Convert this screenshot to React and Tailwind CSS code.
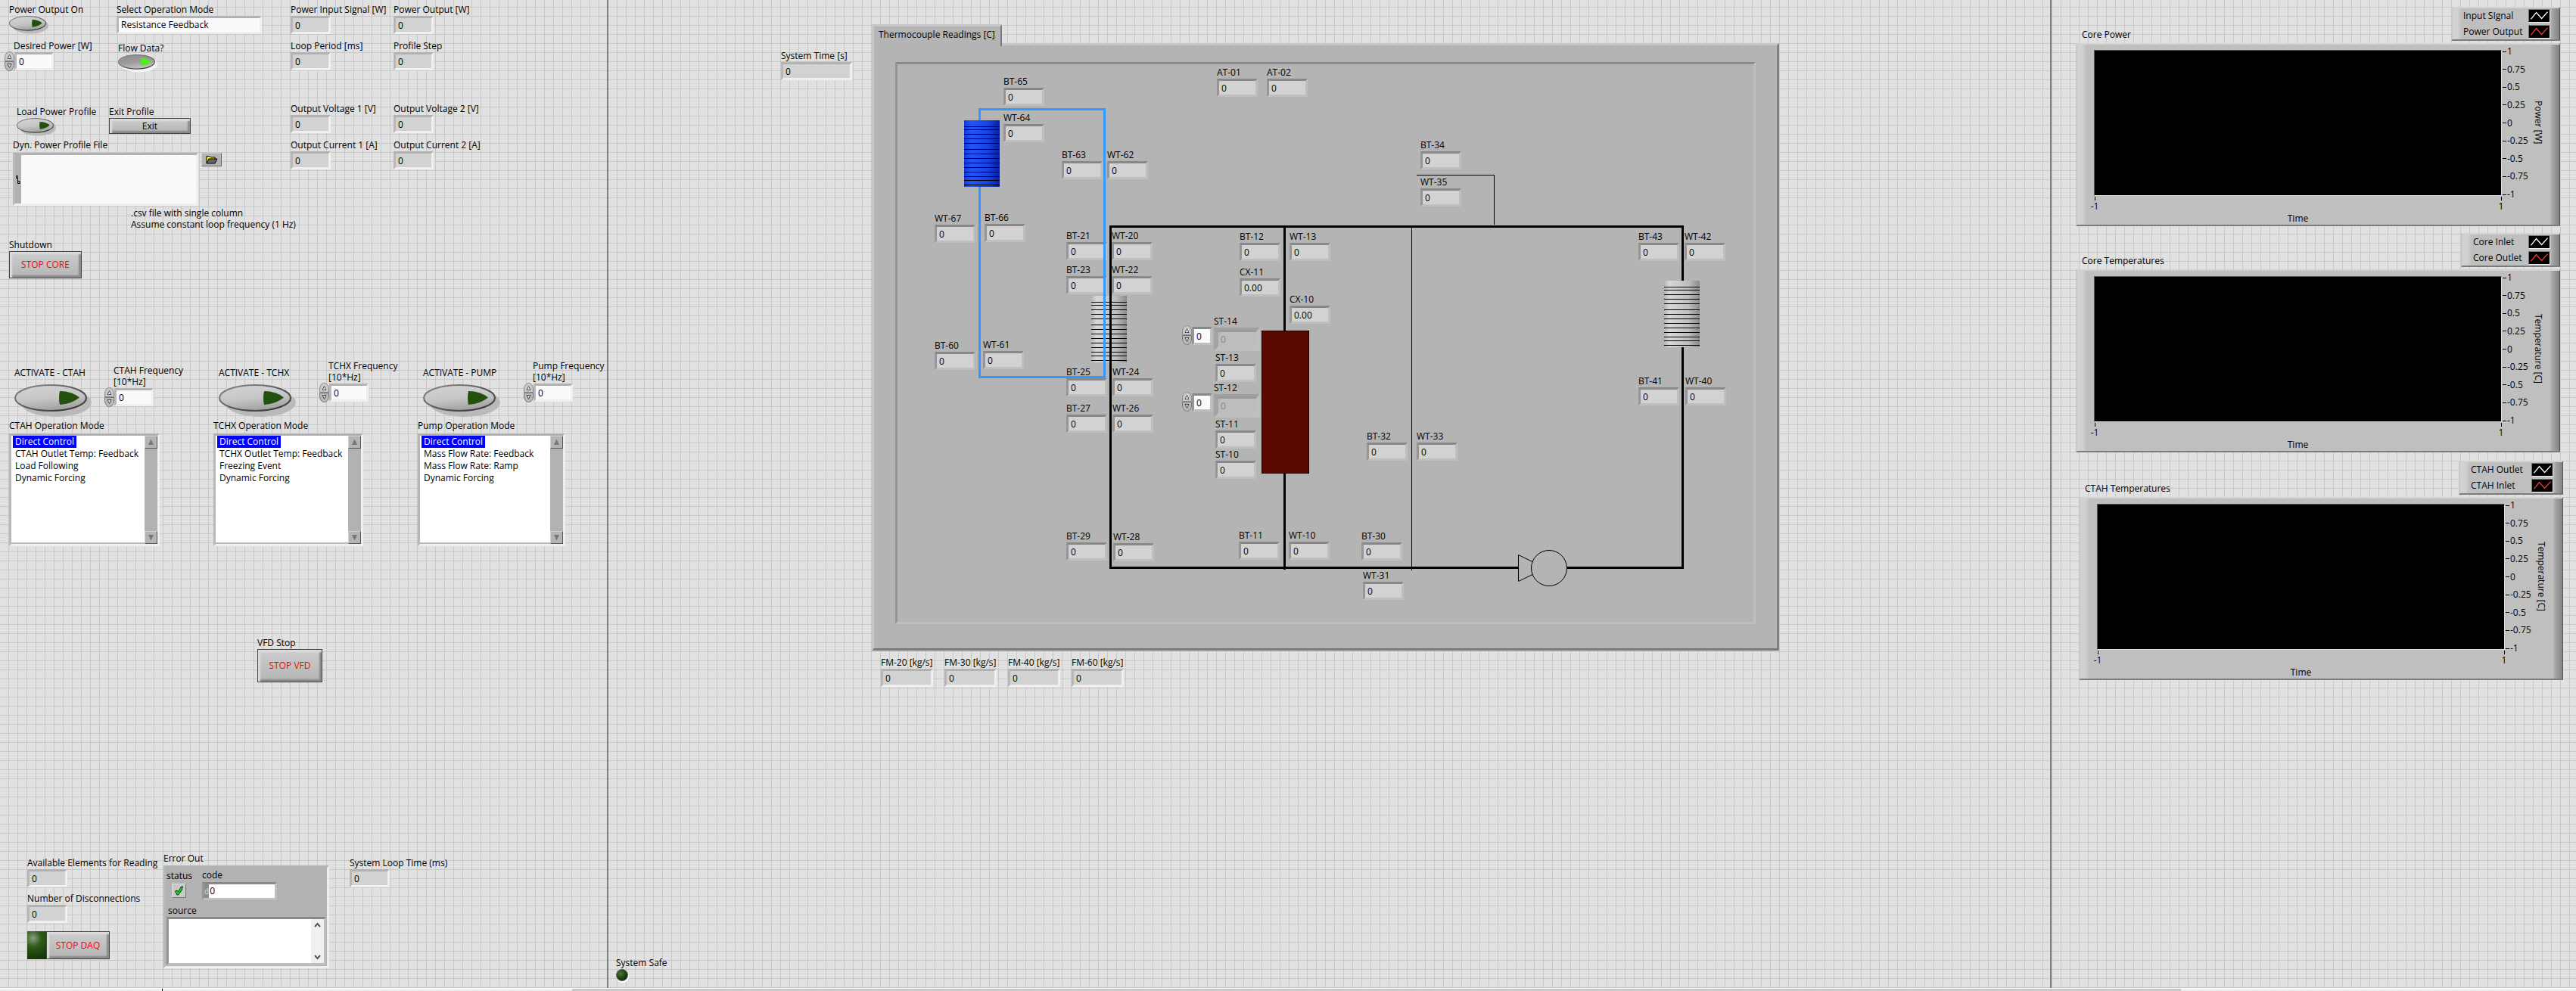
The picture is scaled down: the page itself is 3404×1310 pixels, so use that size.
import React from "react";

const FIELD = "block h-6 border-[3px] px-[3px] text-xs leading-4 text-black outline-none rounded-none appearance-none";
const ON_GRID = "border-t-[#b2b2b2] border-l-[#b8b8b8] border-r-[#efefef] border-b-[#efefef]";
const ON_PANEL = "border-t-[#888888] border-l-[#969696] border-r-[#bfbfbf] border-b-[#bfbfbf]";

function Indicator({ label, value = "0", width = "w-[53px]", gap = "" }) {
  return (
    <label className={`flex flex-col items-start whitespace-nowrap ${gap}`}>
      <span className="leading-4">{label}</span>
      <input readOnly value={value} className={`${FIELD} ${ON_GRID} ${width} bg-[#d2d2d2]`} />
    </label>
  );
}

function Spinner({ label }) {
  return (
    <span className="flex flex-col w-[13px] shrink-0">
      <button type="button" aria-label={`Increase ${label}`} className="block">
        <svg width="13" height="13" viewBox="0 0 13 13" className="block">
          <path d="M0.5 12.5V9C0.5 4 3 0.5 6.5 0.5S12.5 4 12.5 9V12.5Z" fill="#c9c9c9" stroke="#8a8a8a" />
          <path d="M4 9.5L6.5 4.5L9 9.5Z" fill="#e6e6e6" stroke="#555" />
        </svg>
      </button>
      <button type="button" aria-label={`Decrease ${label}`} className="block">
        <svg width="13" height="13" viewBox="0 0 13 13" className="block">
          <path d="M0.5 0.5V4C0.5 9 3 12.5 6.5 12.5S12.5 9 12.5 4V0.5Z" fill="#b9b9b9" stroke="#777" />
          <path d="M4 3.5L6.5 8.5L9 3.5Z" fill="#dcdcdc" stroke="#444" />
        </svg>
      </button>
    </span>
  );
}

function Control({ id, lines }) {
  return (
    <div className="flex flex-col">
      <label htmlFor={id} className="pl-3 leading-[15px] whitespace-nowrap">
        {lines.map((l) => (
          <span key={l} className="block">{l}</span>
        ))}
      </label>
      <div className="flex items-center">
        <Spinner label={lines.join(" ")} />
        <input id={id} defaultValue="0" className={`${FIELD} ${ON_GRID} w-[52px] bg-[#fafafa]`} />
      </div>
    </div>
  );
}

function Oval({ id, on = false, size = "w-[102px] h-[44px]" }) {
  return (
    <button id={id} type="button" role="switch" aria-checked={on} className={`block ${size}`}>
      <svg viewBox="0 0 102 44" preserveAspectRatio="none" className="block w-full h-full">
        <defs>
          <linearGradient id={`${id}-face`} x1="0" y1="0" x2="0.3" y2="1">
            <stop offset="0" stopColor={on ? "#8c8c8c" : "#d4d4d4"} />
            <stop offset="0.6" stopColor={on ? "#9c9c9c" : "#c6c6c6"} />
            <stop offset="1" stopColor={on ? "#c0c0c0" : "#a4a4a4"} />
          </linearGradient>
          <linearGradient id={`${id}-rim`} x1="0" y1="0" x2="1" y2="1">
            <stop offset="0" stopColor="#8c8c8c" />
            <stop offset="1" stopColor="#2c2c2c" />
          </linearGradient>
        </defs>
        <ellipse cx="55" cy="24" rx="47" ry="19" fill={on ? "#f4f4f4" : "#b9b9b9"} />
        <ellipse cx="48" cy="18" rx="47" ry="17" fill={`url(#${id}-face)`} stroke={`url(#${id}-rim)`} strokeWidth="2" />
        <path d="M60 9Q76 9 86 17.5Q76 26 60 27Q58 18 60 9Z" fill={on ? "#4cf016" : "#22500f"} />
      </svg>
    </button>
  );
}

const METAL = "border border-[#444] bg-linear-to-b from-[#cdcdcd] to-[#b4b4b4] shadow-[inset_3px_3px_2px_#dcdcdc,inset_-3px_-3px_2px_#8a8a8a]";

function StopButton({ children, size }) {
  return (
    <button type="button" className={`${METAL} ${size} text-xs text-[#ff0000] whitespace-nowrap`}>
      {children}
    </button>
  );
}

function ArrowButton({ down }) {
  return (
    <button type="button" aria-label={down ? "Scroll down" : "Scroll up"} className="flex h-[17px] w-[17px] items-center justify-center border border-t-[#cfcfcf] border-l-[#cfcfcf] border-r-[#555] border-b-[#555] bg-[#b4b4b4]">
      <svg width="9" height="9" viewBox="0 0 9 9">
        <path d={down ? "M1 1H8L4.5 8.5Z" : "M1 8H8L4.5 0.5Z"} fill="#777" />
      </svg>
    </button>
  );
}

function ModeList({ title, options, width }) {
  return (
    <div className="flex flex-col gap-0.5">
      <span className="leading-4">{title}</span>
      <div className={`flex h-[149px] ${width} border-[3px] border-t-[#b2b2b2] border-l-[#b8b8b8] border-r-[#efefef] border-b-[#efefef] bg-white`}>
        <ul role="listbox" aria-label={title} className="flex-1 border-b-2 border-[#bbb] pl-0.5">
          {options.map((o, i) => (
            <li key={o} role="option" aria-selected={i === 0} className="h-4 leading-4 whitespace-nowrap">
              <span className={i === 0 ? "inline-block bg-[#0000ff] px-[3px] text-white" : "inline-block px-[3px]"}>{o}</span>
            </li>
          ))}
        </ul>
        <div className="flex w-[17px] flex-col justify-between bg-[#b2b2b2]">
          <ArrowButton />
          <ArrowButton down />
        </div>
      </div>
    </div>
  );
}

function Loop({ id, name, freq, title, options, pad, list }) {
  return (
    <div className="flex w-[270px] shrink-0 flex-col">
      <div className="flex items-start justify-start">
        <div className="flex flex-col gap-[7px] pt-[9px] pl-[7px]">
          <label htmlFor={`${id}-on`} className="leading-4 whitespace-nowrap">{name}</label>
          <Oval id={`${id}-on`} />
        </div>
        <div className={pad}>
          <Control id={`${id}-freq`} lines={[freq, "[10*Hz]"]} />
        </div>
      </div>
      <div className="mt-[3px]">
        <ModeList title={title} options={options} width={list} />
      </div>
    </div>
  );
}

function PowerForm() {
  return (
    <div className="flex w-[384px] shrink-0 flex-col">
      <div className="flex pl-3">
        <div className="flex w-[142px] flex-col">
          <label htmlFor="power-on" className="leading-4">Power Output On</label>
          <Oval id="power-on" size="w-[52px] h-6" />
        </div>
        <div className="flex flex-col">
          <label htmlFor="mode" className="leading-4">Select Operation Mode</label>
          <select id="mode" className={`${FIELD} ${ON_GRID} w-[192px] bg-[#fafafa]`}>
            <option>Resistance Feedback</option>
          </select>
        </div>
      </div>
      <div className="mt-2 flex pl-1.5">
        <div className="w-[150px]">
          <Control id="desired" lines={["Desired Power [W]"]} />
        </div>
        <div className="flex flex-col pt-[3px]">
          <label htmlFor="flow" className="leading-4">Flow Data?</label>
          <Oval id="flow" on size="w-[52px] h-6" />
        </div>
      </div>
      <div className="mt-11 flex pl-[22px]">
        <div className="flex w-[122px] flex-col">
          <label htmlFor="load" className="leading-4">Load Power Profile</label>
          <Oval id="load" size="w-[52px] h-6" />
        </div>
        <div className="flex flex-col">
          <label htmlFor="exit" className="leading-4">Exit Profile</label>
          <button id="exit" type="button" className={`${METAL} h-[21px] w-[108px] text-xs leading-4`}>Exit</button>
        </div>
      </div>
      <div className="mt-1 flex flex-col pl-[17px]">
        <label htmlFor="file" className="leading-4">Dyn. Power Profile File</label>
        <div className="mt-0.5 flex items-start gap-1">
          <div className={`flex h-[70px] w-[245px] border-[3px] ${ON_GRID} bg-[#fafafa]`}>
            <span className="flex w-2 items-center justify-center bg-[#b2b2b2]">
              <svg width="6" height="12" viewBox="0 0 6 12" fill="none" stroke="#000">
                <path d="M0.5 1.5H2.5V4.5H0.5ZM2.5 4.5V8.5M2.5 8.5H5V11.5H2.5Z" />
              </svg>
            </span>
            <input id="file" defaultValue="" className="min-w-0 flex-1 bg-transparent px-1 outline-none" />
          </div>
          <button type="button" aria-label="Browse" className="flex h-[18px] w-[27px] items-center justify-center border border-t-[#ccc] border-l-[#ccc] border-r-[#666] border-b-[#666] bg-[#b4b4b4]">
            <svg width="16" height="12" viewBox="0 0 16 12">
              <path d="M1 11V1.5H5L6.5 3H12V5" fill="#f5f000" stroke="#000" />
              <path d="M1 11L4 5H15L12 11Z" fill="#666" stroke="#000" />
            </svg>
          </button>
        </div>
      </div>
      <p className="mt-0.5 pl-[173px] leading-[15px] whitespace-nowrap">
        .csv file with single column
        <br />
        Assume constant loop frequency (1 Hz)
      </p>
      <div className="mt-3 flex flex-col items-start pl-3">
        <span className="leading-4">Shutdown</span>
        <StopButton size="h-9 w-24">STOP CORE</StopButton>
      </div>
    </div>
  );
}

function IndicatorColumn({ labels }) {
  return (
    <div className="flex w-[136px] shrink-0 flex-col gap-[43px]">
      {labels.map((pair) => (
        <div key={pair[0]} className="flex flex-col gap-2">
          {pair.map((l) => (
            <Indicator key={l} label={l} />
          ))}
        </div>
      ))}
    </div>
  );
}

const LOOPS = [
  { id: "ctah", name: "ACTIVATE - CTAH", freq: "CTAH Frequency", title: "CTAH Operation Mode", pad: "pt-1.5 pl-[17px]", list: "w-[199px]", options: ["Direct Control", "CTAH Outlet Temp: Feedback", "Load Following", "Dynamic Forcing"] },
  { id: "tchx", name: "ACTIVATE - TCHX", freq: "TCHX Frequency", title: "TCHX Operation Mode", pad: "pl-[31px]", list: "w-[198px]", options: ["Direct Control", "TCHX Outlet Temp: Feedback", "Freezing Event", "Dynamic Forcing"] },
  { id: "pump", name: "ACTIVATE - PUMP", freq: "Pump Frequency", title: "Pump Operation Mode", pad: "pl-[31px]", list: "w-[195px]", options: ["Direct Control", "Mass Flow Rate: Feedback", "Mass Flow Rate: Ramp", "Dynamic Forcing"] },
];

function ErrorCluster() {
  return (
    <section className="flex flex-col gap-px">
      <span className="leading-4">Error Out</span>
      <div className={`flex h-[136px] w-[219px] flex-col border-[3px] ${ON_GRID} bg-[#b2b2b2] p-px`}>
        <div className="flex h-[46px] gap-[27px]">
          <div className="flex w-[20px] flex-col gap-0.5 pt-0.5">
            <span className="leading-4">status</span>
            <button type="button" aria-label="status OK" className="ml-[7px] flex h-[19px] w-[19px] items-center justify-center border border-t-[#ddd] border-l-[#ddd] border-r-[#777] border-b-[#777] bg-[#c8c8c8]">
              <svg width="13" height="13" viewBox="0 0 13 13">
                <path d="M1.5 7L4 6L5.5 8L9.5 1H11.5L10 6L5.5 12H4Z" fill="#12e012" stroke="#000" strokeWidth="0.8" />
              </svg>
            </button>
          </div>
          <div className="flex flex-col">
            <label htmlFor="code" className="leading-[18px]">code</label>
            <div className={`flex h-6 w-[99px] border-[3px] bg-white ${ON_PANEL}`}>
              <span className="shrink-0 bg-[#8c8c8c] text-[10px] leading-[18px] text-[#ddd]">d</span>
              <input id="code" readOnly value="0" className="min-w-0 flex-1 px-px text-xs outline-none" />
            </div>
          </div>
        </div>
        <label htmlFor="source" className="px-0.5 pt-0.5 leading-4">source</label>
        <div className={`flex h-[65px] w-full border-[3px] bg-white ${ON_PANEL}`}>
          <textarea id="source" readOnly className="min-w-0 flex-1 resize-none outline-none" />
          <div className="flex w-[17px] flex-col items-center justify-between bg-[#f0f0f0] py-1">
            <svg width="9" height="8" viewBox="0 0 9 8" fill="none" stroke="#505050" strokeWidth="2"><path d="M1 6L4.5 2L8 6" /></svg>
            <svg width="9" height="8" viewBox="0 0 9 8" fill="none" stroke="#505050" strokeWidth="2"><path d="M1 2L4.5 6L8 2" /></svg>
          </div>
        </div>
      </div>
    </section>
  );
}

function LeftPane() {
  return (
    <aside className="flex flex-col border-r-2 border-[#808080] pt-[5px]">
      <div className="flex">
        <PowerForm />
        <IndicatorColumn labels={[["Power Input Signal [W]", "Loop Period [ms]"], ["Output Voltage 1 [V]", "Output Current 1 [A]"]]} />
        <IndicatorColumn labels={[["Power Output [W]", "Profile Step"], ["Output Voltage 2 [V]", "Output Current 2 [A]"]]} />
      </div>
      <div className="mt-[108px] flex pl-3">
        {LOOPS.map((l) => (
          <Loop key={l.id} {...l} />
        ))}
      </div>
      <div className="mt-[120px] flex flex-col items-start pl-[340px]">
        <span className="leading-4">VFD Stop</span>
        <StopButton size="h-11 w-[86px]">STOP VFD</StopButton>
      </div>
      <div className="mt-auto flex items-start pb-[26px] pl-9">
        <div className="flex w-[180px] flex-col gap-[7px] pt-1.5">
          <Indicator label="Available Elements for Reading" />
          <Indicator label="Number of Disconnections" />
          <div className="flex pt-1">
            <span className="h-[37px] w-[25px] bg-[radial-gradient(circle_at_30%_25%,#8aa080_0,#2c5a18_35%,#0e2c04_100%)]" />
            <StopButton size="h-[37px] w-[84px]">STOP DAQ</StopButton>
          </div>
        </div>
        <ErrorCluster />
        <div className="pt-1.5 pl-[27px]">
          <Indicator label="System Loop Time (ms)" />
        </div>
      </div>
    </aside>
  );
}

/* Sensor positions on the loop diagram, in canvas pixels. */
const SENSORS = [
  ["BT-65", 140, 15], ["WT-64", 140, 63], ["AT-01", 422, 3], ["AT-02", 488, 3],
  ["BT-63", 217, 112], ["WT-62", 277, 112], ["WT-67", 49, 196], ["BT-66", 115, 195],
  ["BT-21", 223, 219], ["WT-20", 283, 219], ["BT-23", 223, 264], ["WT-22", 283, 264],
  ["BT-12", 452, 220], ["WT-13", 518, 220], ["CX-11", 452, 267, "0.00"], ["CX-10", 518, 303, "0.00"],
  ["BT-60", 49, 364], ["WT-61", 113, 363], ["BT-25", 223, 399], ["WT-24", 284, 399],
  ["BT-27", 223, 447], ["WT-26", 284, 447], ["BT-29", 223, 616], ["WT-28", 285, 617],
  ["BT-11", 451, 615], ["WT-10", 517, 615], ["ST-13", 420, 380], ["ST-11", 420, 468],
  ["ST-10", 420, 508], ["BT-34", 691, 99], ["WT-35", 691, 148], ["BT-43", 979, 220],
  ["WT-42", 1040, 220], ["BT-41", 979, 411], ["WT-40", 1041, 411], ["BT-32", 620, 484],
  ["WT-33", 686, 484], ["BT-30", 613, 616], ["WT-31", 615, 668],
];

const FINS = [8, 12, 18, 24, 30, 38, 44, 50, 56, 62, 68, 74, 79, 85];

function Exchanger({ x, y, fill }) {
  return (
    <g>
      <rect x={x} y={y} width="47" height="88" fill={`url(#${fill})`} />
      {FINS.map((f) => (
        <rect key={f} x={x} y={y + f} width="47" height="1" fill="#000" />
      ))}
    </g>
  );
}

function Piping() {
  return (
    <svg viewBox="0 0 1134 737" className="pointer-events-none absolute top-0 left-0 h-[737px] w-[1134px]" fill="none">
      <defs>
        <linearGradient id="steel">
          <stop offset="0" stopColor="#b4b4b4" />
          <stop offset="0.15" stopColor="#d8d8d8" />
          <stop offset="0.7" stopColor="#bdbdbd" />
          <stop offset="1" stopColor="#8a8a8a" />
        </linearGradient>
        <linearGradient id="cobalt">
          <stop offset="0" stopColor="#1237d8" />
          <stop offset="0.2" stopColor="#2456f4" />
          <stop offset="0.7" stopColor="#1640dc" />
          <stop offset="1" stopColor="#061f9c" />
        </linearGradient>
      </defs>
      <Exchanger x={256} y={306} fill="steel" />
      <g shapeRendering="crispEdges">
        <path d="M108.5 59.5H273.5V413.5H108.5Z" stroke="#3399ff" strokeWidth="3" />
        <path d="M686 146.5H788.5V212M679.5 215V669" stroke="#000" />
        <path d="M281.5 214.5H1037.5V665.5H884M820 665.5H281.5V213" stroke="#000" strokeWidth="3" />
        <path d="M511.5 214V352M511.5 541V668" stroke="#000" strokeWidth="3" />
        <rect x="481.5" y="352.5" width="62" height="188" fill="#5a0900" stroke="#000" />
      </g>
      <Exchanger x={88} y={74} fill="cobalt" />
      <Exchanger x={1013} y={286} fill="steel" />
      <path d="M820.5 648.5V683.5L840 674M820.5 648.5L840 658" stroke="#000" />
      <circle cx="861" cy="666" r="23.5" fill="#b4b4b4" stroke="#000" />
    </svg>
  );
}

function SensorArray({ id, x, y }) {
  return (
    <div className="absolute flex items-start gap-0.5" style={{ left: x, top: y }}>
      <div className="flex pt-[13px]">
        <Spinner label={`${id} index`} />
        <input aria-label={`${id} index`} defaultValue="0" className={`${FIELD} ${ON_PANEL} mt-0.5 w-[27px] bg-[#fafafa]`} />
      </div>
      <label className="flex flex-col">
        <span className="leading-4">{id}</span>
        <span className="flex h-[31px] w-[61px] border-[3px] border-t-[#a0a0a0] border-l-[#a4a4a4] border-r-[#bfbfbf] border-b-[#bfbfbf]">
          <input disabled value="0" readOnly className="block w-full rounded-none border-[3px] border-t-[#9a9a9a] border-l-[#a4a4a4] border-r-[#bfbfbf] border-b-[#bfbfbf] bg-[#bdbdbd] px-[3px] text-xs leading-4 text-[#868686]" />
        </span>
      </label>
    </div>
  );
}

function Diagram() {
  return (
    <div className="relative h-[743px] border-[3px] border-t-[#8c8c8c] border-l-[#969696] border-r-[#bfbfbf] border-b-[#bfbfbf]">
      {SENSORS.map(([id, x, y, value = "0"]) => (
        <label key={id} className="absolute flex w-[54px] flex-col" style={{ left: x, top: y }}>
          <span className="leading-4">{id}</span>
          <input readOnly value={value} className={`${FIELD} ${ON_PANEL} w-full bg-[#d2d2d2]`} />
        </label>
      ))}
      <SensorArray id="ST-14" x={376} y={332} />
      <SensorArray id="ST-12" x={376} y={420} />
      <Piping />
    </div>
  );
}

function MiddlePane() {
  return (
    <main className="flex flex-col border-r-2 border-[#808080] pt-8">
      <div className="flex items-start gap-[26px] pl-[228px]">
        <div className="pt-[34px]">
          <Indicator label="System Time [s]" width="w-[94px]" />
        </div>
        <div className="flex flex-col items-start">
          <button type="button" role="tab" aria-selected="true" className="relative z-10 -mb-1 h-[29px] w-[172px] rounded-t-xs border-t-3 border-r-2 border-l-3 border-t-[#c6c6c6] border-r-[#7a7a7a] border-l-[#c6c6c6] bg-[#b4b4b4] px-1.5 pb-1 text-left text-xs">
            Thermocouple Readings [C]
          </button>
          <div role="tabpanel" className="w-[1199px] border-[3px] border-t-[#c6c6c6] border-r-[#828282] border-b-[#777] border-l-[#c6c6c6] bg-[#b4b4b4] px-7 pt-[22px] pb-8">
            <Diagram />
          </div>
          <div className="mt-2 flex gap-[15px] pl-3">
            {["FM-20 [kg/s]", "FM-30 [kg/s]", "FM-40 [kg/s]", "FM-60 [kg/s]"].map((l) => (
              <Indicator key={l} label={l} width="w-[69px]" />
            ))}
          </div>
        </div>
      </div>
      <div className="mt-auto flex flex-col items-start pb-[9px] pl-2.5">
        <span className="leading-4">System Safe</span>
        <span role="img" aria-label="off" className="size-4 rounded-full border border-[#555] bg-[radial-gradient(circle_at_35%_35%,#4a7a3a_0,#1c4410_50%,#0c2a04_100%)] shadow-[1px_2px_1px_#fff]" />
      </div>
    </main>
  );
}

const TICKS = ["1", "0.75", "0.5", "0.25", "0", "-0.25", "-0.5", "-0.75", "-1"];
const FRAME = "border-t-2 border-l-2 border-r border-b-2 border-t-[#d2d2d2] border-l-[#c8c8c8] border-r-[#555] border-b-[#7c7c7c] bg-[linear-gradient(to_right,#d2d2d2_0,#d0d0d0_7px,#bfbfbf_12px,#bfbfbf_calc(100%-13px),#a4a4a4_calc(100%-9px),#828282_100%)]";

function Trace({ color }) {
  return (
    <svg width="29" height="18" viewBox="0 0 29 18" className="block border border-t-[#777] border-l-[#777] border-r-[#eee] border-b-[#eee] bg-black" fill="none">
      <path d="M2 14L10 4L18 13L27 3" stroke={color} strokeWidth="1.5" />
    </svg>
  );
}

function Chart({ title, legend, legendWidth, yLabel }) {
  return (
    <section className="flex flex-col gap-[3px]">
      <div className="flex items-end justify-between pl-2">
        <h2 className="leading-4">{title}</h2>
        <ul className={`flex h-[45px] flex-col justify-between py-px pr-3 pl-3.5 ${legendWidth} ${FRAME}`}>
          {legend.map((l, i) => (
            <li key={l} className="flex items-center justify-between whitespace-nowrap">
              <span className="leading-4">{l}</span>
              <Trace color={i === 0 ? "#ffffff" : "#f03838"} />
            </li>
          ))}
        </ul>
      </div>
      <div className={`flex h-[242px] ${FRAME}`}>
        <div className="flex flex-1 flex-col pt-[7px] pl-[22px]">
          <div className="h-[193px] border-t border-r border-b border-l border-t-[#555] border-l-[#555] border-r-[#ddd] border-b-[#ddd] bg-black" />
          <div className="-mx-1.5 mt-px flex justify-between leading-4">
            {["-1", "1"].map((t) => (
              <span key={t} className="flex w-3.5 flex-col items-center">
                <i className="h-[5px] w-px bg-black" />
                {t}
              </span>
            ))}
          </div>
          <span className="text-center leading-4">Time</span>
        </div>
        <ol className="flex h-[206px] w-9 flex-col justify-between pt-px pl-px leading-4">
          {TICKS.map((t) => (
            <li key={t} className="flex items-center gap-px whitespace-nowrap">
              <i className="h-px w-[5px] shrink-0 bg-black" />
              {t}
            </li>
          ))}
        </ol>
        <span className="flex h-[206px] w-10 items-center justify-center pr-4 leading-4">
          <span className="whitespace-nowrap [writing-mode:vertical-rl]">{yLabel}</span>
        </span>
      </div>
    </section>
  );
}

function RightPane() {
  return (
    <aside className="flex flex-col gap-[9px] pt-[9px]">
      <div className="pr-[21px] pl-8">
        <Chart title="Core Power" legend={["Input SIgnal", "Power Output"]} legendWidth="w-36" yLabel="Power [W]" />
      </div>
      <div className="pr-[21px] pl-8">
        <Chart title="Core Temperatures" legend={["Core Inlet", "Core Outlet"]} legendWidth="w-[131px]" yLabel="Temperature [C]" />
      </div>
      <div className="pt-0.5 pr-[17px] pl-9">
        <Chart title="CTAH Temperatures" legend={["CTAH Outlet", "CTAH Inlet"]} legendWidth="w-[138px]" yLabel="Temperature [C]" />
      </div>
    </aside>
  );
}

export default function App() {
  return (
    <div className="flex h-screen flex-col overflow-hidden bg-[#e1e1e1] bg-[linear-gradient(to_right,transparent_11px,#c8c8c8_11px),linear-gradient(to_bottom,transparent_11px,#c8c8c8_11px)] bg-size-[12px_12px] bg-position-[0_-2px] font-['Open_Sans','Noto_Sans',sans-serif] text-xs text-black">
      <div className="grid min-h-0 flex-1 grid-cols-[minmax(0,804fr)_minmax(0,1907fr)_minmax(0,693fr)]">
        <LeftPane />
        <MiddlePane />
        <RightPane />
      </div>
      <footer className="flex h-1 shrink-0 overflow-hidden border-t border-white bg-[#f0f0f0]">
        <span className="-mt-px w-[215px] shrink-0 border-t border-r border-black bg-[#f0f0f0]" />
        <span className="w-[541px] shrink-0" />
        <span className="flex-1 bg-[#c8c8c8]" />
        <span className="w-[522px] shrink-0" />
      </footer>
    </div>
  );
}
